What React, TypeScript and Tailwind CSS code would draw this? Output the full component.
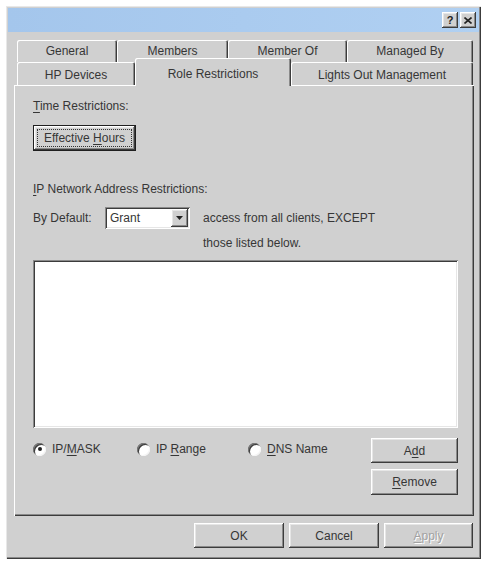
import React from 'react';

const raised =
  'shadow-[inset_-1px_-1px_0_#3c3c3c,inset_1px_1px_0_#ffffff,inset_-2px_-2px_0_#8a8a8a,inset_2px_2px_0_#e6e6e6]';
const sunken =
  'shadow-[inset_1px_1px_0_#8a8a8a,inset_-1px_-1px_0_#ffffff,inset_2px_2px_0_#3c3c3c,inset_-2px_-2px_0_#e6e6e6]';

function Mn({ children }: { children: React.ReactNode }) {
  return <span className="underline underline-offset-2">{children}</span>;
}

function Button({
  children,
  className = '',
  disabled = false,
}: {
  children: React.ReactNode;
  className?: string;
  disabled?: boolean;
}) {
  return (
    <div
      className={`flex items-center justify-center bg-[#d0d0d0] ${raised} ${
        disabled ? 'text-[#a2a2a2] [text-shadow:1px_1px_0_#ffffff]' : ''
      } ${className}`}
    >
      <span>{children}</span>
    </div>
  );
}

function Radio({ label, checked = false, className = '' }: { label: React.ReactNode; checked?: boolean; className?: string }) {
  return (
    <div className={`flex items-center gap-[6px] leading-[14px] ${className}`}>
      <span
        className={`flex h-[13px] w-[13px] items-center justify-center rounded-full bg-white shadow-[inset_1px_1px_0_#7a7a7a,inset_-1px_-1px_0_#f4f4f4,inset_2px_2px_0_#3c3c3c]`}
      >
        {checked && <span className="h-[4px] w-[4px] rounded-full bg-[#222]" />}
      </span>
      <span>{label}</span>
    </div>
  );
}

function Tab({ label, className = '' }: { label: string; className?: string }) {
  return (
    <div
      className={`flex items-center justify-center bg-[#d0d0d0] shadow-[inset_1px_1px_0_#ffffff,inset_-1px_0_0_#3c3c3c,inset_-2px_0_0_#8a8a8a] rounded-t-[2px] ${className}`}
    >
      {label}
    </div>
  );
}

export default function App() {
  return (
    <div className="h-[564px] w-[484px] overflow-hidden bg-white pl-[6px] pt-[6px] font-['Liberation_Sans',Arial,sans-serif] text-[12px] text-[#363636]">
      {/* Window */}
      <div className="flex h-[553px] w-[475px] flex-col bg-[#d0d0d0] p-[2px] shadow-[inset_1px_1px_0_#e8e8e8,inset_-1px_-1px_0_#3c3c3c,inset_-2px_-2px_0_#8a8a8a]">
        {/* Title bar */}
        <div className="flex h-[24px] items-center justify-end gap-[2px] bg-gradient-to-r from-[#a4c6ec] to-[#b0d0f2] pr-[3px]">
          <div className={`flex h-[16px] w-[16px] items-center justify-center bg-[#d0d0d0] ${raised} text-[11px] font-bold leading-none text-[#222]`}>
            ?
          </div>
          <div className={`flex h-[16px] w-[16px] items-center justify-center bg-[#d0d0d0] ${raised}`}>
            <svg width="8" height="7" viewBox="0 0 8 7">
              <path d="M0.5 0.5 L7.5 6.5 M7.5 0.5 L0.5 6.5" stroke="#222" strokeWidth="1.6" />
            </svg>
          </div>
        </div>

        <div className="flex flex-col pl-[6px] pr-[5px]">
          {/* Tabs */}
          <div className="mt-[8px] flex flex-col pl-[3px] pr-[1px]">
            <div className="flex h-[22px]">
              <Tab label="General" className="w-[100px]" />
              <Tab label="Members" className="w-[111px]" />
              <Tab label="Member Of" className="w-[119px]" />
              <Tab label="Managed By" className="w-[126px]" />
            </div>
            <div className="flex h-[23px] items-end">
              <Tab label="HP Devices" className="h-[23px] w-[118px] pt-[2px]" />
              <div className="relative z-10 -mb-[1px] flex h-[28px] w-[156px] items-start justify-center rounded-t-[2px] bg-[#d0d0d0] pt-[7px] shadow-[inset_1px_1px_0_#ffffff,inset_-1px_0_0_#3c3c3c,inset_-2px_0_0_#8a8a8a]">
                Role Restrictions
              </div>
              <Tab label="Lights Out Management" className="h-[23px] w-[182px] pt-[2px]" />
            </div>
          </div>

          {/* Panel */}
          <div className="flex h-[431px] flex-col pl-[19px] pr-[16px] pt-[14px] shadow-[inset_1px_1px_0_#ffffff,inset_-1px_-1px_0_#3c3c3c,inset_-2px_-2px_0_#8a8a8a]">
            <div className="leading-[14px]">
              <Mn>T</Mn>ime Restrictions:
            </div>
            <div className="mt-[12px] flex h-[26px] w-[103px] border border-[#1e1e1e] bg-[#d0d0d0]">
              <div className={`flex h-full w-full p-[3px] ${raised}`}>
                <div className="flex flex-1 items-center justify-center border border-dotted border-[#333] leading-[14px]">
                  <span>
                    Effective <Mn>H</Mn>ours
                  </span>
                </div>
              </div>
            </div>

            <div className="mt-[31px] leading-[14px]">
              <Mn>I</Mn>P Network Address Restrictions:
            </div>

            <div className="mt-[11px] flex items-start">
              <div className="w-[72px] leading-[22px]">By Default:</div>
              <div className={`flex h-[22px] w-[85px] items-center bg-white pl-[5px] pr-[2px] ${sunken}`}>
                <span className="flex-1">Grant</span>
                <div className={`flex h-[18px] w-[17px] items-center justify-center bg-[#d0d0d0] ${raised}`}>
                  <svg width="7" height="4" viewBox="0 0 7 4">
                    <polygon points="0,0 7,0 3.5,4" fill="#222" />
                  </svg>
                </div>
              </div>
              <div className="ml-[13px] flex flex-col">
                <div className="leading-[22px]">access from all clients, EXCEPT</div>
                <div className="mt-[7px] leading-[14px]">those listed below.</div>
              </div>
            </div>

            {/* List */}
            <div className={`mt-[10px] h-[168px] w-full bg-white ${sunken}`} />

            {/* Bottom row */}
            <div className="mt-[10px] flex items-start">
              <div className="mt-[4px] flex flex-1">
                <Radio label={<>IP/<Mn>M</Mn>ASK</>} checked className="w-[104px]" />
                <Radio label={<>IP <Mn>R</Mn>ange</>} className="w-[111px]" />
                <Radio label={<><Mn>D</Mn>NS Name</>} />
              </div>
              <div className="flex w-[87px] flex-col gap-[6px]">
                <Button className="h-[25px]">
                  A<Mn>d</Mn>d
                </Button>
                <Button className="h-[26px]">
                  <Mn>R</Mn>emove
                </Button>
              </div>
            </div>
          </div>

          {/* Footer */}
          <div className="mt-[7px] flex justify-end gap-[5px] pr-[1px]">
            <Button className="h-[25px] w-[90px]">OK</Button>
            <Button className="h-[25px] w-[90px]">Cancel</Button>
            <Button className="h-[25px] w-[89px]" disabled>
              <Mn>A</Mn>pply
            </Button>
          </div>
        </div>
      </div>
    </div>
  );
}
